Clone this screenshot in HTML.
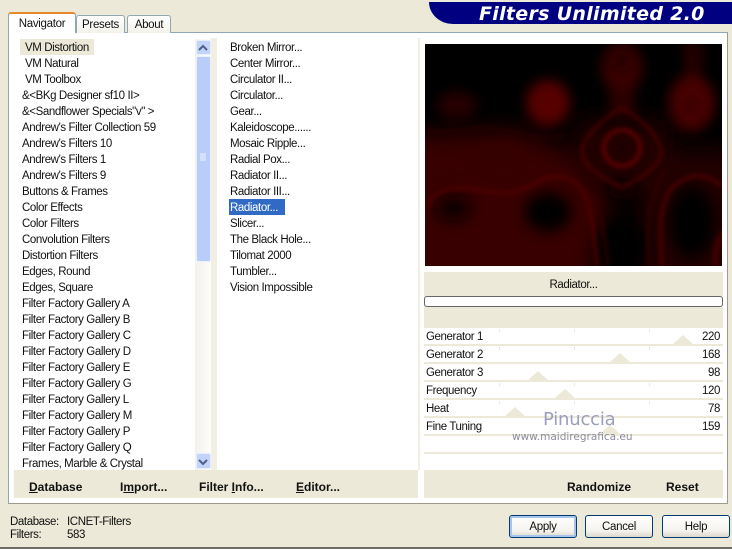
<!DOCTYPE html>
<html><head><meta charset="utf-8"><style>
html,body{margin:0;padding:0}
body{width:732px;height:549px;position:relative;overflow:hidden;background:#ECE9D8;font:11.5px "Liberation Sans",sans-serif;color:#111}
div{position:absolute;box-sizing:border-box}
.t{white-space:pre;line-height:16px;height:16px;margin-top:1px;letter-spacing:-.4px}
.b{font-weight:bold;font-size:12px;margin-top:0;letter-spacing:0}
.b u{text-decoration:underline}
.tab{background:linear-gradient(#fff,#f3f2ea);border:1px solid #91a7b4;border-bottom:none;border-radius:3px 3px 0 0;text-align:center;font-size:11.5px;letter-spacing:-.3px}
.btn{top:515px;width:68px;height:23px;border:1px solid #003c74;border-radius:3px;background:linear-gradient(#fff,#f4f3ee 70%,#dcd8cc);text-align:center;line-height:22px;font-size:11.5px;letter-spacing:-.3px}
.row{left:424px;width:299px;height:16px;background:#fff}
.tri{width:0;height:0;border-left:10px solid transparent;border-right:10px solid transparent;border-bottom:9px solid #ECE9D8}
.tick{width:1px;height:3px;background:#ECE9D8}
</style></head><body>
<div style="left:429px;top:2px;width:303px;height:22px;background:#000080;border-radius:0 0 0 24px/0 0 0 22px"></div>
<div class="t" style="left:479px;top:4px;margin-top:0;height:20px;color:#fff;font:italic bold 19px/20px 'DejaVu Sans',sans-serif;letter-spacing:.3px">Filters Unlimited 2.0</div>

<div style="left:8px;top:32px;width:720px;height:472px;background:#fff;border:1px solid #91a7b4;border-color:#91a7b4 #9d9a8c #9d9a8c #91a7b4"></div>
<div class="tab" style="left:76px;top:15px;width:49px;height:18px;line-height:19px">Presets</div>
<div class="tab" style="left:127px;top:15px;width:44px;height:18px;line-height:19px">About</div>
<div class="tab" style="left:8px;top:12px;width:68px;height:21px;line-height:21px;background:#fff;border-top:2px solid #e68b2c;border-bottom:none;z-index:2">Navigator</div>

<div style="left:14px;top:470px;width:404px;height:28px;background:#ECE9D8"></div>
<div style="left:424px;top:470px;width:299px;height:28px;background:#ECE9D8"></div>
<div style="left:424px;top:272px;width:299px;height:198px;background:#ECE9D8"></div>
<div style="left:211px;top:38px;width:6px;height:432px;background:#F1EFE4"></div>
<div style="left:418px;top:38px;width:2px;height:432px;background:#F1EFE4"></div>

<div style="left:20px;top:39px;width:74px;height:16px;background:#ECE9D8"></div>
<div class="t" style="left:25px;top:39px">VM Distortion</div>
<div class="t" style="left:25px;top:55px">VM Natural</div>
<div class="t" style="left:25px;top:71px">VM Toolbox</div>
<div class="t" style="left:22px;top:87px">&amp;&lt;BKg Designer sf10 II&gt;</div>
<div class="t" style="left:22px;top:103px">&amp;&lt;Sandflower Specials"v" &gt;</div>
<div class="t" style="left:22px;top:119px">Andrew's Filter Collection 59</div>
<div class="t" style="left:22px;top:135px">Andrew's Filters 10</div>
<div class="t" style="left:22px;top:151px">Andrew's Filters 1</div>
<div class="t" style="left:22px;top:167px">Andrew's Filters 9</div>
<div class="t" style="left:22px;top:183px">Buttons &amp; Frames</div>
<div class="t" style="left:22px;top:199px">Color Effects</div>
<div class="t" style="left:22px;top:215px">Color Filters</div>
<div class="t" style="left:22px;top:231px">Convolution Filters</div>
<div class="t" style="left:22px;top:247px">Distortion Filters</div>
<div class="t" style="left:22px;top:263px">Edges, Round</div>
<div class="t" style="left:22px;top:279px">Edges, Square</div>
<div class="t" style="left:22px;top:295px">Filter Factory Gallery A</div>
<div class="t" style="left:22px;top:311px">Filter Factory Gallery B</div>
<div class="t" style="left:22px;top:327px">Filter Factory Gallery C</div>
<div class="t" style="left:22px;top:343px">Filter Factory Gallery D</div>
<div class="t" style="left:22px;top:359px">Filter Factory Gallery E</div>
<div class="t" style="left:22px;top:375px">Filter Factory Gallery G</div>
<div class="t" style="left:22px;top:391px">Filter Factory Gallery L</div>
<div class="t" style="left:22px;top:407px">Filter Factory Gallery M</div>
<div class="t" style="left:22px;top:423px">Filter Factory Gallery P</div>
<div class="t" style="left:22px;top:439px">Filter Factory Gallery Q</div>
<div class="t" style="left:22px;top:455px">Frames, Marble &amp; Crystal</div>

<div style="left:195px;top:39px;width:16px;height:431px;background:linear-gradient(90deg,#f3f1ec,#fdfdfa)"></div>
<div style="left:196px;top:40px;width:15px;height:15px;background:#c3d4fb;border:1px solid #e6eefc;border-radius:2px"></div>
<div style="left:196px;top:56px;width:15px;height:206px;background:#b8cdf8;border:1px solid #eaf0fd;border-radius:2px"></div>
<div style="left:196px;top:453px;width:15px;height:16px;background:#c3d4fb;border:1px solid #e6eefc;border-radius:2px"></div>
<svg style="position:absolute;left:195px;top:39px" width="16" height="431" viewBox="0 0 16 431">
<path d="M4 11 8 7 12 11" fill="none" stroke="#4d6185" stroke-width="2"/>
<path d="M4 421 8 425 12 421" fill="none" stroke="#4d6185" stroke-width="2"/>
<path d="M5 115h6M5 117h6M5 119h6M5 121h6" stroke="#eef3fe" stroke-width="1"/>
</svg>

<div class="t" style="left:230px;top:39px">Broken Mirror...</div>
<div class="t" style="left:230px;top:55px">Center Mirror...</div>
<div class="t" style="left:230px;top:71px">Circulator II...</div>
<div class="t" style="left:230px;top:87px">Circulator...</div>
<div class="t" style="left:230px;top:103px">Gear...</div>
<div class="t" style="left:230px;top:119px">Kaleidoscope......</div>
<div class="t" style="left:230px;top:135px">Mosaic Ripple...</div>
<div class="t" style="left:230px;top:151px">Radial Pox...</div>
<div class="t" style="left:230px;top:167px">Radiator II...</div>
<div class="t" style="left:230px;top:183px">Radiator III...</div>
<div style="left:229px;top:199px;width:56px;height:16px;background:#316AC5"></div>
<div class="t" style="left:230px;top:199px;color:#fff">Radiator...</div>
<div class="t" style="left:230px;top:215px">Slicer...</div>
<div class="t" style="left:230px;top:231px">The Black Hole...</div>
<div class="t" style="left:230px;top:247px">Tilomat 2000</div>
<div class="t" style="left:230px;top:263px">Tumbler...</div>
<div class="t" style="left:230px;top:279px">Vision Impossible</div>

<svg style="position:absolute;left:425px;top:44px" width="297" height="222" viewBox="425 44 297 222">
<defs>
<filter id="f8" x="-60%" y="-60%" width="220%" height="220%"><feGaussianBlur stdDeviation="7"/></filter>
<filter id="f5" x="-60%" y="-60%" width="220%" height="220%"><feGaussianBlur stdDeviation="6"/></filter>
<filter id="f2" x="-20%" y="-20%" width="140%" height="140%"><feGaussianBlur stdDeviation="2"/></filter>
<filter id="f14" x="-50%" y="-50%" width="200%" height="200%"><feGaussianBlur stdDeviation="12"/></filter>
</defs>
<rect x="425" y="44" width="297" height="222" fill="#000"/>
<g filter="url(#f14)">
<path d="M400 135 520 130 565 150 610 200 590 290 400 290Z" fill="#380000"/>
<rect x="640" y="150" width="100" height="130" fill="#240000"/>
<rect x="575" y="120" width="95" height="70" fill="#240000"/>
</g>
<g filter="url(#f5)">
<ellipse cx="548" cy="103" rx="22" ry="23" fill="#560000"/>
<ellipse cx="457" cy="105" rx="20" ry="14" fill="#260000"/>
<ellipse cx="497" cy="155" rx="24" ry="12" fill="#340000"/>
<ellipse cx="622" cy="68" rx="21" ry="26" fill="#380000"/>
<rect x="610" y="88" width="24" height="28" fill="#2e0000"/>
<ellipse cx="692" cy="103" rx="23" ry="28" fill="#4a0000"/>
<rect x="684" y="40" width="18" height="38" fill="#280000"/>
</g>
<g filter="url(#f5)"><circle cx="622" cy="60" r="7" fill="#1a0000"/><circle cx="692" cy="105" r="8" fill="#340000"/></g>
<g filter="url(#f8)">
<ellipse cx="548" cy="212" rx="23" ry="20" fill="#000"/>
<ellipse cx="453" cy="208" rx="18" ry="13" fill="#0a0000"/>
<ellipse cx="622" cy="248" rx="25" ry="28" fill="#000"/>
<ellipse cx="692" cy="222" rx="23" ry="36" fill="#000"/>
<ellipse cx="622" cy="190" rx="14" ry="10" fill="#080000"/>
</g>
<g fill="none" filter="url(#f2)">
<circle cx="622" cy="148" r="18" stroke="#5e0000" stroke-width="4"/>
<circle cx="622" cy="148" r="3" fill="#180000" stroke="none"/>
<path d="M622 108C604 118 583 136 582 152 584 168 604 178 622 188 640 178 660 168 661 152 660 136 640 118 622 108Z" stroke="#4a0000" stroke-width="3"/>
<path d="M428 208C430 192 450 185 480 190 505 196 522 192 542 180 565 170 585 182 591 215 595 240 596 255 597 266" stroke="#520000" stroke-width="3"/>
<path d="M425 180C450 170 480 175 505 180 530 184 555 165 570 172 592 188 604 215 608 266" stroke="#360000" stroke-width="2.5"/>
<path d="M425 130C450 135 470 125 495 128 520 134 540 142 565 135" stroke="#260000" stroke-width="2.5"/>
<path d="M662 266C660 235 658 205 672 188 690 172 705 172 722 186" stroke="#520000" stroke-width="3"/>
<path d="M650 266C645 225 650 195 665 170" stroke="#300000" stroke-width="3"/>
<path d="M716 266C714 250 718 240 724 232" stroke="#3a0000" stroke-width="7"/>
</g>
</svg>

<div class="t" style="left:424px;top:276px;width:299px;text-align:center">Radiator...</div>
<div style="left:424px;top:296px;width:299px;height:11px;background:#fff;border:1px solid #666;border-radius:3px"></div>

<div class="row" style="top:328px"></div>
<div class="row" style="top:346px"></div>
<div class="row" style="top:364px"></div>
<div class="row" style="top:382px"></div>
<div class="row" style="top:400px"></div>
<div class="row" style="top:418px"></div>
<div class="row" style="top:436px"></div>
<div class="row" style="top:454px"></div>
<div class="tri" style="left:673px;top:335px"></div>
<div class="tri" style="left:610px;top:353px"></div>
<div class="tri" style="left:528px;top:371px"></div>
<div class="tri" style="left:555px;top:389px"></div>
<div class="tri" style="left:505px;top:407px"></div>
<div class="tri" style="left:600px;top:425px"></div>
<div class="tick" style="left:499px;top:329px"></div><div class="tick" style="left:574px;top:329px"></div><div class="tick" style="left:649px;top:329px"></div>
<div class="tick" style="left:499px;top:347px"></div><div class="tick" style="left:574px;top:347px"></div><div class="tick" style="left:649px;top:347px"></div>
<div class="tick" style="left:499px;top:383px"></div><div class="tick" style="left:574px;top:383px"></div><div class="tick" style="left:649px;top:383px"></div>
<div class="tick" style="left:499px;top:401px"></div><div class="tick" style="left:574px;top:401px"></div><div class="tick" style="left:649px;top:401px"></div>

<div class="t" style="left:426px;top:328px">Generator 1</div><div class="t" style="left:680px;top:328px;width:40px;text-align:right">220</div>
<div class="t" style="left:426px;top:346px">Generator 2</div><div class="t" style="left:680px;top:346px;width:40px;text-align:right">168</div>
<div class="t" style="left:426px;top:364px">Generator 3</div><div class="t" style="left:680px;top:364px;width:40px;text-align:right">98</div>
<div class="t" style="left:426px;top:382px">Frequency</div><div class="t" style="left:680px;top:382px;width:40px;text-align:right">120</div>
<div class="t" style="left:426px;top:400px">Heat</div><div class="t" style="left:680px;top:400px;width:40px;text-align:right">78</div>
<div class="t" style="left:426px;top:418px">Fine Tuning</div><div class="t" style="left:680px;top:418px;width:40px;text-align:right">159</div>

<div class="t" style="left:543px;top:410px;margin-top:0;height:20px;font:18px/20px 'DejaVu Sans',sans-serif;color:#9a9fbe;letter-spacing:-.2px">Pinuccia</div>
<div class="t" style="left:512px;top:429px;margin-top:0;font:10.5px/16px 'DejaVu Sans',sans-serif;color:#8c8c9e;letter-spacing:0">www.maidiregrafica.eu</div>

<div class="t b" style="left:29px;top:479px"><u>D</u>atabase</div>
<div class="t b" style="left:120px;top:479px">I<u>m</u>port...</div>
<div class="t b" style="left:199px;top:479px">Filter <u>I</u>nfo...</div>
<div class="t b" style="left:296px;top:479px"><u>E</u>ditor...</div>
<div class="t b" style="left:567px;top:479px">Randomize</div>
<div class="t b" style="left:666px;top:479px">Reset</div>

<div class="t" style="left:10px;top:513px">Database:</div>
<div class="t" style="left:67px;top:513px">ICNET-Filters</div>
<div class="t" style="left:10px;top:526px">Filters:</div>
<div class="t" style="left:67px;top:526px">583</div>

<div class="btn" style="left:509px;box-shadow:inset 0 0 0 2px #a9c4ec">Apply</div>
<div class="btn" style="left:585px">Cancel</div>
<div class="btn" style="left:662px">Help</div>
<div style="left:0;top:547px;width:732px;height:2px;background:#6e6d64"></div>
</body></html>
